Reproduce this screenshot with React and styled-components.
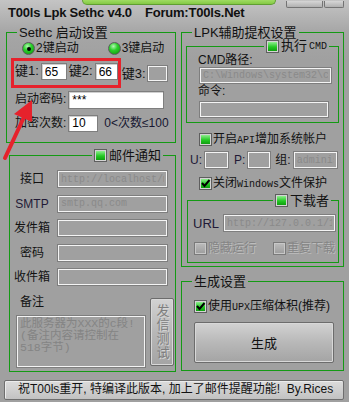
import styled, { createGlobalStyle } from 'styled-components';

const GREEN = '#149a14';
const SANS = `"Liberation Sans", "Noto Sans CJK SC", sans-serif`;
const MONO = `"Liberation Mono", "Noto Sans CJK SC", monospace`;

const GlobalStyle = createGlobalStyle`
  html, body { margin: 0; padding: 0; background: #a0a0a0; }
  body { font-family: ${SANS}; font-size: 12px; line-height: 1.2; color: #121212; }
  * { box-sizing: border-box; }
`;

const Window = styled.div`
  position: relative;
  width: 349px;
  height: 402px;
  overflow: hidden;
  background: linear-gradient(#c4c4c4 0, #a6a6a6 32px, #a0a0a0 60px);
`;

const TitleBar = styled.div`
  position: relative;
  height: 25px;
  display: flex;
  align-items: flex-end;
  gap: 13px;
  padding: 0 0 5px 8px;
`;

const TitleText = styled.span`
  font: bold 13px ${SANS};
  letter-spacing: -0.2px;
  color: #111;
`;

const GreenTab = styled.div`
  position: absolute;
  left: 82px;
  top: -1px;
  width: 194px;
  height: 6px;
  background: linear-gradient(#a6e06a, #84c944);
  border: 1px solid #5f9e32;
  border-top: 0;
  border-radius: 0 0 5px 5px;
`;

const WinButtons = styled.div`
  position: absolute;
  top: 1px;
  right: 5px;
  display: flex;
  gap: 1px;
`;

const WinBtn = styled.div`
  width: ${(p) => p.$w}px;
  height: 7px;
  border: 1px solid #737373;
  border-top: 0;
  border-radius: 0 0 2px 2px;
  background: linear-gradient(#d6d6d6, #b0b0b0);
`;

const Body = styled.div`
  display: flex;
  gap: 5px;
  padding: 0 5px 0 6px;
`;

const Column = styled.div`
  width: ${(p) => p.$w}px;
  display: flex;
  flex-direction: column;
`;

const Group = styled.fieldset`
  margin: ${(p) => p.$margin || '0'};
  min-width: 0;
  border: 1px solid ${GREEN};
  padding: ${(p) => p.$pad || '0 4px 4px'};
  display: flex;
  flex-direction: column;
`;

const Legend = styled.legend`
  padding: 0 2px;
  height: ${(p) => p.$h || 15}px;
  font-size: 13px;
  line-height: ${(p) => p.$h || 15}px;
  margin-left: ${(p) => (p.$right !== undefined ? 'auto' : '6px')};
  margin-right: ${(p) => (p.$right !== undefined ? `${p.$right}px` : '0')};
  white-space: nowrap;
`;

const LegendInner = styled.span`
  display: inline-flex;
  align-items: center;
  gap: 2px;
  height: 100%;
  vertical-align: top;
`;

const Latin = styled.span`
  font: 10px ${MONO};
  letter-spacing: 0;
`;

const Row = styled.div`
  display: flex;
  align-items: center;
  height: ${(p) => p.$h}px;
  margin-top: ${(p) => p.$mt || 0}px;
  padding-left: ${(p) => p.$pl || 0}px;
  gap: ${(p) => (p.$gap !== undefined ? p.$gap : 2)}px;
  flex: none;
  line-height: 15px;
  white-space: nowrap;
`;

const Label = styled.span`
  font-size: ${(p) => p.$size || 12}px;
  margin-left: ${(p) => p.$ml || 0}px;
  color: ${(p) => p.$ink || '#121212'};
  white-space: nowrap;
`;

const Input = styled.input.attrs({ readOnly: true, tabIndex: -1 })`
  width: ${(p) => p.$w}px;
  height: ${(p) => p.$h || 17}px;
  margin: ${(p) => p.$mt || 0}px 0 0 ${(p) => p.$ml || 0}px;
  padding: 0 3px;
  flex: none;
  font: ${(p) => (p.$mono ? `10px ${MONO}` : `12px ${SANS}`)};
  color: ${(p) => (p.$mono ? '#8a8a8a' : '#000')};
  background: ${(p) => (p.$white ? '#fff' : 'transparent')};
  border: 1px solid #7e7e7e;
  box-shadow: ${(p) => (p.$white ? 'inset 1px 1px 0 #cfcfcf' : 'inset 0 0 0 1px #f4f4f4')};
  outline: none;
  border-radius: 0;
`;

const Highlight = styled.div`
  display: flex;
  align-items: flex-start;
  gap: 2px;
  height: 30px;
  padding: 2px 0 0 1px;
  border: 3px solid #e6222c;
`;

const Option = styled.span`
  display: inline-flex;
  align-items: center;
  gap: 1px;
  font-size: 12px;
  line-height: 15px;
  white-space: nowrap;
  flex: none;
`;

const Radio = styled.span`
  width: 13px;
  height: 13px;
  flex: none;
  border-radius: 50%;
  border: 1px solid #5c5c5c;
  background: radial-gradient(circle at 40% 30%, #b4f7b4 0, #2bd02b 40%, #0b8f0b 100%);
  display: inline-flex;
  align-items: center;
  justify-content: center;
  &::after {
    content: '';
    width: 4px;
    height: 4px;
    border-radius: 50%;
    background: #000;
    display: ${(p) => (p.$on ? 'block' : 'none')};
  }
`;

const Box = styled.span`
  position: relative;
  width: 13px;
  height: 13px;
  flex: none;
  margin-left: ${(p) => p.$ml || 0}px;
  border: 1px solid ${(p) => (p.$off ? '#7a7a7a' : '#5e5e5e')};
  box-shadow: inset 0 0 0 1px ${(p) => (p.$off ? '#c8c8c8' : '#d4d4d4')};
  background: ${(p) =>
    p.$off
      ? 'linear-gradient(#bcbcbc, #9c9c9c)'
      : 'linear-gradient(#a4f3a4, #22c822 55%, #0c920c)'};
`;

const Tick = styled.svg`
  position: absolute;
  left: 0;
  top: 0;
`;

const CheckText = styled.span`
  font-size: 12px;
  white-space: nowrap;
  color: ${(p) => (p.$off ? '#858585' : '#121212')};
  text-shadow: ${(p) => (p.$off ? '1px 1px 0 #bdbdbd' : 'none')};
`;

function Check({ checked, off, ml }) {
  return (
    <Box $off={off} $ml={ml}>
      {checked && (
        <Tick width="11" height="11" viewBox="0 0 11 11">
          <path d="M2 5 L4.5 8 L9.5 2" stroke="#000" strokeWidth="2" fill="none" />
        </Tick>
      )}
    </Box>
  );
}

const MailRow = styled.div`
  display: flex;
  align-items: center;
  height: 24.5px;
  gap: 6px;
  flex: none;
`;

const MailLabel = styled.span`
  width: 38px;
  text-align: center;
  font-size: 12px;
  color: ${(p) => p.$ink || '#121212'};
  white-space: nowrap;
`;

const NoteArea = styled.div`
  display: flex;
  align-items: flex-start;
  gap: 4px;
  flex: none;
`;

const NoteColumn = styled.div`
  display: flex;
  flex-direction: column;
`;

const NoteLabel = styled.span`
  width: 38px;
  height: 24px;
  line-height: 24px;
  text-align: center;
  font-size: 12px;
`;

const NoteBox = styled.div`
  width: 130px;
  height: 53px;
  margin: 1px 0 0 3px;
  padding: 2px 3px;
  border: 1px solid #7e7e7e;
  box-shadow: inset 0 0 0 1px #f4f4f4;
  font: 11.5px ${MONO};
  line-height: 12px;
  color: #848484;
  white-space: pre;
  overflow: hidden;
`;

const PushButton = styled.button`
  width: ${(p) => p.$w}px;
  height: ${(p) => p.$h}px;
  margin: ${(p) => p.$margin || 0};
  padding: 0;
  flex: none;
  border: 1px solid #6c6c6c;
  border-radius: 2px;
  box-shadow: inset 0 0 0 1px #d8d8d8;
  background: linear-gradient(#d2d2d2, #b8b8b8 50%, #a4a4a4);
  font: 13px ${SANS};
  color: ${(p) => (p.$off ? '#7e7e7e' : '#111')};
  text-shadow: ${(p) => (p.$off ? '1px 1px 0 #d6d6d6' : 'none')};
  writing-mode: ${(p) => (p.$vertical ? 'vertical-rl' : 'horizontal-tb')};
  letter-spacing: ${(p) => (p.$vertical ? '1px' : '0')};
`;

const SmallLabel = styled.div`
  height: ${(p) => p.$h}px;
  line-height: ${(p) => p.$h}px;
  padding-left: 11px;
  font-size: 12px;
  flex: none;
`;

const StatusBar = styled.div`
  height: 20px;
  margin: 8px 5px 0 4px;
  padding-left: 13px;
  display: flex;
  align-items: center;
  border: 1px solid #6e6e6e;
  border-radius: 2px;
  box-shadow: inset 1px 1px 0 #ececec;
  background: linear-gradient(#dcdcdc, #c2c2c2);
  font-size: 12px;
  white-space: pre;
  color: #111;
`;

const Arrow = styled.svg`
  position: absolute;
  left: 0;
  top: 95px;
  pointer-events: none;
`;

export default function App() {
  return (
    <>
      <GlobalStyle />
      <Window>
        <TitleBar>
          <GreenTab />
          <TitleText>T00ls Lpk Sethc v4.0</TitleText>
          <TitleText>Forum:T00ls.Net</TitleText>
          <WinButtons>
            <WinBtn $w={37} />
            <WinBtn $w={20} />
          </WinButtons>
        </TitleBar>

        <Body>
          <Column $w={170}>
            <Group $pad="0 4px 7px">
              <Legend>Sethc 启动设置</Legend>
              <Row $h={17} $pl={11} $gap={29}>
                <Option><Radio $on />2键启动</Option>
                <Option><Radio />3键启动</Option>
              </Row>
              <Row $h={30} $mt={1} $gap={1}>
                <Highlight>
                  <Label $size={13}>键1:</Label>
                  <Input $white $w={26} value="65" />
                  <Label $size={13}>键2:</Label>
                  <Input $white $w={23} value="66" />
                </Highlight>
                <Label $size={13}>键3:</Label>
                <Input $w={21} value="" />
              </Row>
              <Row $h={23} $pl={4}>
                <Label>启动密码:</Label>
                <Input $white $w={96} $h={18} value="***" />
              </Row>
              <Row $h={24} $pl={4}>
                <Label>加密次数:</Label>
                <Input $white $w={30} value="10" />
                <Label $ink="#161630" $ml={4}>0&lt;次数≤100</Label>
              </Row>
            </Group>

            <Group $margin="5px 0 0 3px" $pad="4px 1px 3px 3px">
              <Legend $right={11}>
                <LegendInner><Check />邮件通知</LegendInner>
              </Legend>
              <MailRow>
                <MailLabel>接口</MailLabel>
                <Input $mono $w={111} $h={18} value="http://localhost/mail.php" />
              </MailRow>
              <MailRow>
                <MailLabel $ink="#221a36">SMTP</MailLabel>
                <Input $mono $w={111} $h={18} value="smtp.qq.com" />
              </MailRow>
              <MailRow>
                <MailLabel>发件箱</MailLabel>
                <Input $w={111} $h={18} value="" />
              </MailRow>
              <MailRow>
                <MailLabel>密码</MailLabel>
                <Input $w={111} $h={18} value="" />
              </MailRow>
              <MailRow>
                <MailLabel>收件箱</MailLabel>
                <Input $w={111} $h={18} value="" />
              </MailRow>
              <NoteArea>
                <NoteColumn>
                  <NoteLabel>备注</NoteLabel>
                  <NoteBox>{'此服务器为XXX的c段!\n(备注内容请控制在\n518字节)'}</NoteBox>
                </NoteColumn>
                <PushButton $off $vertical $w={24} $h={68} $margin="8.5px 0 0 0">
                  发信测试
                </PushButton>
              </NoteArea>
            </Group>
          </Column>

          <Column $w={163}>
            <Group $pad="0 4px 3px">
              <Legend>LPK辅助提权设置</Legend>
              <Group $margin="-1px 0 0 0" $pad="0 0 4px 0">
                <Legend $right={9} $h={14}>
                  <LegendInner><Check />执行<Latin>CMD</Latin></LegendInner>
                </Legend>
                <SmallLabel $h={14}>CMD路径:</SmallLabel>
                <Input $mono $w={133} $ml={12} value="C:\Windows\system32\cmd.exe" />
                <SmallLabel $h={15}>命令:</SmallLabel>
                <Input $w={130} $ml={12} $mt={2} value="" />
              </Group>
              <Row $h={22} $mt={5} $pl={13} $gap={1}>
                <Check />
                <CheckText>开启<Latin>API</Latin>增加系统帐户</CheckText>
              </Row>
              <Row $h={20} $pl={4} $gap={2}>
                <Label $ink="#221a36">U:</Label>
                <Input $w={25} $h={18} value="" />
                <Label $ink="#221a36" $ml={3}>P:</Label>
                <Input $w={24} $h={18} value="" />
                <Label $ml={2}>组:</Label>
                <Input $mono $w={45} $h={18} value="administrators" />
              </Row>
              <Row $h={22} $mt={2} $pl={13} $gap={1}>
                <Check checked />
                <CheckText>关闭<Latin>Windows</Latin>文件保护</CheckText>
              </Row>
              <Group $margin="0 0 0 1px" $pad="0 0 6px 0">
                <Legend $right={7} $h={13}>
                  <LegendInner><Check />下载者</LegendInner>
                </Legend>
                <Row $h={18} $mt={7} $pl={5} $gap={4}>
                  <Label $size={13} $ink="#221a36">URL</Label>
                  <Input $mono $w={113} $h={18} value="http://127.0.0.1/1.exe" />
                </Row>
                <Row $h={16} $mt={8} $pl={6} $gap={1}>
                  <Check off />
                  <CheckText $off>隐藏运行</CheckText>
                  <Check off ml={16} />
                  <CheckText $off>重复下载</CheckText>
                </Row>
              </Group>
            </Group>

            <Group $margin="7px 0 0 0" $pad="0 4px 7px">
              <Legend>生成设置</Legend>
              <Row $h={16} $mt={9} $pl={8} $gap={1}>
                <Check checked />
                <CheckText>使用<Latin>UPX</Latin>压缩体积(推荐)</CheckText>
              </Row>
              <PushButton $w={140} $h={41} $margin="8px 0 0 8px">生成</PushButton>
            </Group>
          </Column>
        </Body>

        <StatusBar>{'祝T00ls重开, 特编译此版本, 加上了邮件提醒功能!  By.Rices'}</StatusBar>

        <Arrow width="40" height="70" viewBox="0 0 40 70">
          <line x1="5" y1="63" x2="24" y2="22" stroke="#e6222c" strokeWidth="4" strokeLinecap="round" />
          <polygon points="32,5 32,27 14,19" fill="#e6222c" />
        </Arrow>
      </Window>
    </>
  );
}
